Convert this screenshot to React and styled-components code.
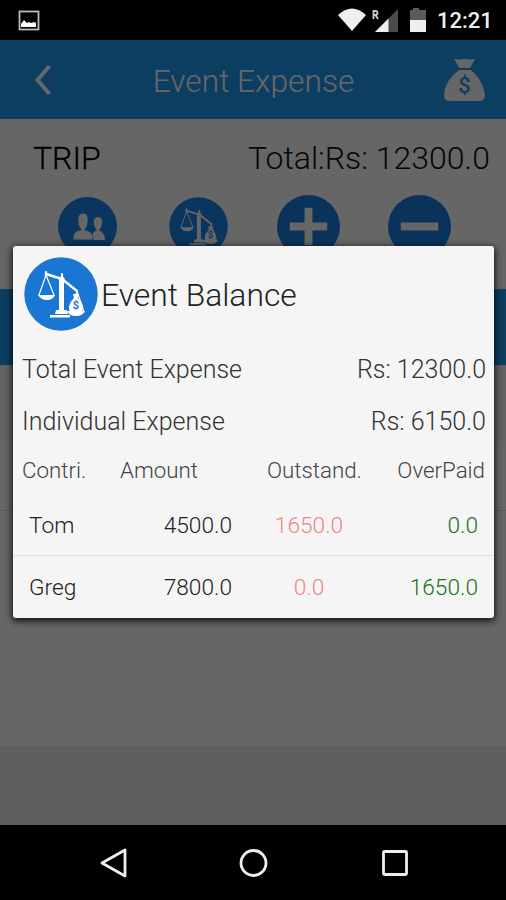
import React from "react";
import styled, { createGlobalStyle } from "styled-components";

const GlobalStyle = createGlobalStyle`
  body {
    margin: 0;
    background: #000;
    font-family: Roboto, "Liberation Sans", sans-serif;
    font-weight: 300;
  }
`;

const Phone = styled.div`
  position: relative;
  display: flex;
  flex-direction: column;
  width: 506px;
  height: 900px;
  overflow: hidden;
  background: #000;
`;

const StatusBar = styled.div`
  display: flex;
  align-items: center;
  box-sizing: border-box;
  height: 40px;
  padding: 0 13px 0 18px;
  background: #000;
`;

const StatusIcons = styled.div`
  display: flex;
  margin-left: auto;
`;

const Clock = styled.span`
  width: 56px;
  margin-left: 11px;
  padding-top: 2px;
  color: #efefef;
  font-size: 22px;
  font-weight: 500;
  line-height: 40px;
  white-space: nowrap;
`;

const Screen = styled.div`
  position: relative;
  display: flex;
  flex-direction: column;
  height: 785px;
  background: #fff;
`;

const AppBar = styled.header`
  display: flex;
  align-items: center;
  justify-content: space-between;
  box-sizing: border-box;
  height: 79px;
  padding: 0 20px 0 33px;
  background: #209bf5;
`;

const Title = styled.h1`
  margin: 0 0 0 10px;
  padding-top: 3px;
  color: #fff;
  font-size: 31.7px;
  font-weight: 300;
`;

const TripRow = styled.div`
  display: flex;
  justify-content: space-between;
  height: 76px;
  padding: 0 16px 0 33px;
  color: #111;
  font-size: 32px;
  line-height: 78px;
`;

const TripName = styled.span`
  color: #000;
  -webkit-text-stroke: 0.3px #000;
`;

const Actions = styled.div`
  display: flex;
  align-items: center;
  height: 62px;
  padding-left: 58px;
`;

const Action = styled.div`
  display: flex;
  margin-right: ${props => props.gap || 0}px;
`;

const ListHeader = styled.div`
  height: 76px;
  margin-top: 32px;
  background: #209bf5;
`;

const ListItem = styled.div`
  height: ${props => props.height}px;
  background: ${props => props.color || "#fff"};
  border-bottom: 1px solid ${props => props.line || "#e4e4e4"};
`;

const Footer = styled.div`
  height: 79px;
  margin-top: auto;
  background: #eee;
`;

const Scrim = styled.div`
  position: absolute;
  inset: 0;
  display: flex;
  align-items: flex-start;
  justify-content: center;
  padding-top: 206px;
  background: rgba(0, 0, 0, 0.6);
`;

const Dialog = styled.div`
  width: 481px;
  height: 372px;
  margin-left: 1px;
  border-radius: 3px;
  background: #f5f5f5;
  box-shadow: 0 2px 7px 1px rgba(0, 0, 0, 0.85);
`;

const DialogTitle = styled.div`
  display: flex;
  align-items: center;
  height: 96px;
  padding-left: 11px;
  color: #222;
  font-size: 31.8px;

  span {
    margin-left: 3px;
    padding-top: 2px;
  }
`;

const Summary = styled.div`
  display: flex;
  justify-content: space-between;
  height: 52px;
  padding: 0 8px 0 9px;
  color: #333;
  font-size: 25px;
  line-height: 56px;
`;

const Columns = styled.div`
  display: grid;
  grid-template-columns: 98px 147px 118px 1fr;
  height: 48px;
  padding: 0 9px 0 9px;
  color: #444;
  font-size: 22.3px;
  line-height: 49px;

  span:last-child {
    text-align: right;
  }
`;

const Person = styled.div`
  display: grid;
  grid-template-columns: 100px 103px 154px 1fr;
  height: 61px;
  padding: 0 16px 0 16px;
  color: #222;
  font-size: 22.7px;
  line-height: 64px;

  & + & {
    border-top: 1px solid #dedede;
  }
`;

const Cell = styled.span`
  text-align: ${props => props.align || "left"};
  color: ${props => props.color || "inherit"};
`;

const NavBar = styled.nav`
  display: flex;
  align-items: center;
  justify-content: space-between;
  box-sizing: border-box;
  height: 75px;
  padding: 0 96px 0 99px;
`;

const PictureIcon = () => (
  <svg width="22" height="22" viewBox="0 0 22 22">
    <rect x="1.5" y="2.5" width="19" height="18" fill="none" stroke="#bbb" strokeWidth="1.8" />
    <path d="M3 18v-3l3-4 3 3 2-1 2 1 3-1 2 1v4z" fill="#fff" />
  </svg>
);

const StatusGlyphs = () => (
  <svg width="89" height="26" viewBox="337 7 89 26">
    <path d="M338 15q14-13 28 0l-14 16z" fill="#efefef" />
    <path d="M398 9v23h-23z" fill="#4b4b4b" />
    <path d="M388.500 18.500v13.500h-13.500z" fill="#efefef" />
    <path d="M373.500 19v-8h2q2 0 2 2t-2 2h-2m2 0 2.500 4" fill="none" stroke="#ccc" strokeWidth="1.800" />
    <path d="M410 10h3V8h6v2h7v10h-16z" fill="#5b5b5b" />
    <path d="M410 20h16v12h-16z" fill="#efefef" />
  </svg>
);

const BackIcon = () => (
  <svg width="20" height="32" viewBox="0 0 20 32">
    <path d="M16.500 2 4.500 16l12 14" fill="none" stroke="#fff" strokeWidth="4" />
  </svg>
);

const MoneyBag = () => (
  <svg width="42" height="44" viewBox="0 0 42 44">
    <path
      d="M10 1q5 1 10.500-.2Q26 2 31 1l-5 9H15.500zM15 12h12q12 10 14 25 0 6-6 6H6q-6 0-6-6 1-15 15-25z"
      fill="#fff"
    />
    <text
      x="20.500"
      y="35"
      textAnchor="middle"
      fill="#209bf5"
      fontFamily="Roboto, sans-serif"
      fontSize="22"
      fontWeight="500"
    >
      $
    </text>
  </svg>
);

const PeopleIcon = () => (
  <svg width="59" height="59" viewBox="0 0 59 59">
    <circle cx="29.500" cy="29.500" r="29.500" fill="#1b85ee" />
    <path
      d="M34 43q-1-8 5-10-4-4-3-9 0-4 4-4 5 0 4 6 0 4-3 7 6 3 6 10z"
      fill="#fff"
    />
    <path
      d="M15 43c0-8 3-9 8-10q-4-5-3-12 1-5 5-5 6 0 5 8 0 5-3 9c5 1 8 3 8 10z"
      fill="#fff"
      stroke="#1b85ee"
      strokeWidth=".8"
    />
  </svg>
);

const BalanceIcon = ({ size, color = "#1976d2" }) => (
  <svg width={size} height={size} viewBox="0 0 74 74">
    <circle cx="37" cy="37" r="36.700" fill={color} />
    <g fill="none" stroke="#fff" strokeLinecap="round" strokeLinejoin="round">
      <path d="M22 17l16 5 15 12" strokeWidth="2.400" />
      <path d="M22 18 15 38M22 18l8 20M53 34l-7 21M53 34l7 21" strokeWidth="1.200" />
      <path d="M22 15v4M38 17v6" strokeWidth="2.200" />
    </g>
    <path d="M14 38h17q-2 5-8 5t-9-5zM35 24h5v29h3l1 4H31l1-4h3zM26 58h20v2.500H26z" fill="#fff" />
    <path d="M43 54h18q-2 5-9 5t-9-5z" fill="#fff" />
    <path d="M49 37h6l-1 4q5 5 5 10 0 4-4 4h-6q-4 0-4-4 0-5 5-10z" fill="#fff" />
    <circle cx="37.800" cy="22.500" r="2.800" fill="#fff" />
    <text
      x="52"
      y="52"
      textAnchor="middle"
      fill={color}
      fontFamily="Roboto, sans-serif"
      fontSize="11"
      fontWeight="700"
    >
      $
    </text>
  </svg>
);

const RoundIcon = ({ plus }) => (
  <svg width="63" height="63" viewBox="0 0 64 64">
    <circle cx="32" cy="32" r="32" fill="#1a7fe4" />
    <path d={plus ? "M13 32h38M32 13v38" : "M13 32h38"} stroke="#fff" strokeWidth="8" />
  </svg>
);

const people = [
  { name: "Tom", amount: "4500.0", outstanding: "1650.0", overPaid: "0.0" },
  { name: "Greg", amount: "7800.0", outstanding: "0.0", overPaid: "1650.0" }
];

const BalanceDialog = () => (
  <Dialog>
    <DialogTitle>
      <BalanceIcon size={74} />
      <span>Event Balance</span>
    </DialogTitle>
    <Summary>
      <span>Total Event Expense</span>
      <span>Rs: 12300.0</span>
    </Summary>
    <Summary>
      <span>Individual Expense</span>
      <span>Rs: 6150.0</span>
    </Summary>
    <Columns>
      <span>Contri.</span>
      <span>Amount</span>
      <span>Outstand.</span>
      <span>OverPaid</span>
    </Columns>
    {people.map(person => (
      <Person key={person.name}>
        <Cell>{person.name}</Cell>
        <Cell align="right">{person.amount}</Cell>
        <Cell align="center" color="#f08488">{person.outstanding}</Cell>
        <Cell align="right" color="#187020">{person.overPaid}</Cell>
      </Person>
    ))}
  </Dialog>
);

const App = () => (
  <Phone>
    <GlobalStyle />
    <StatusBar>
      <PictureIcon />
      <StatusIcons>
        <StatusGlyphs />
      </StatusIcons>
      <Clock>12:21</Clock>
    </StatusBar>
    <Screen>
      <AppBar>
        <BackIcon />
        <Title>Event Expense</Title>
        <MoneyBag />
      </AppBar>
      <TripRow>
        <TripName>TRIP</TripName>
        <span>Total:Rs: 12300.0</span>
      </TripRow>
      <Actions>
        <Action gap={52}>
          <PeopleIcon />
        </Action>
        <Action gap={49}>
          <BalanceIcon size={59} color="#1b85ee" />
        </Action>
        <Action gap={48}>
          <RoundIcon plus />
        </Action>
        <Action>
          <RoundIcon />
        </Action>
      </Actions>
      <ListHeader />
      <ListItem height={75} color="#f8f8f8" line="#f8f8f8" />
      <ListItem height={69} />
      <Footer />
      <Scrim>
        <BalanceDialog />
      </Scrim>
    </Screen>
    <NavBar>
      <svg width="29" height="32" viewBox="0 0 29 32">
        <path d="M26 3v26L3 16z" fill="none" stroke="#eee" strokeWidth="2.800" strokeLinejoin="round" />
      </svg>
      <svg width="30" height="30" viewBox="0 0 30 30">
        <circle cx="14.500" cy="15" r="12.500" fill="none" stroke="#eee" strokeWidth="2.800" />
      </svg>
      <svg width="30" height="30" viewBox="0 0 30 30">
        <rect x="3.500" y="3.500" width="23" height="23" rx="1" fill="none" stroke="#eee" strokeWidth="2.800" />
      </svg>
    </NavBar>
  </Phone>
);

export default App;
